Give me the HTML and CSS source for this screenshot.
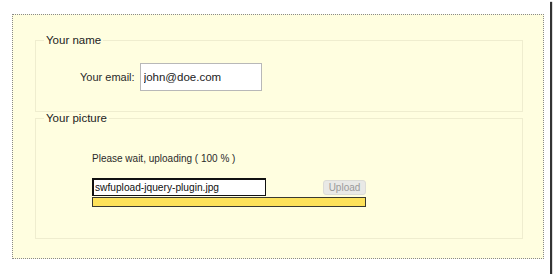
FILE: index.html
```html
<!DOCTYPE html>
<html lang="en">
<head>
  <meta charset="UTF-8">
  <title>SWFUpload jQuery plugin</title>
  <link rel="stylesheet" href="styles.css">
</head>
<body>

  <div class="shot">
    <div class="panel">

      <fieldset class="name_box">
        <legend>Your name</legend>
        <div class="email_row">
          <label for="email">Your email:</label>
          <input type="text" id="email" class="email" value="john@doe.com">
        </div>
      </fieldset>

      <fieldset class="picture_box">
        <legend>Your picture</legend>
        <div class="upload_area">
          <p class="status">Please wait, uploading ( 100 % )</p>
          <div class="file_row">
            <div class="file_name">swfupload-jquery-plugin.jpg</div>
            <a href="#" class="upload_button">Upload</a>
          </div>
          <div class="progress"><div class="progress_fill" style="width: 100%"></div></div>
        </div>
      </fieldset>

    </div>
  </div>

</body>
</html>
```

FILE: styles.css
```css
body {
  margin: 0;
  background: #fff;
  font-family: "Liberation Sans", Arial, sans-serif;
  color: #2a2a2a;
}

.shot {
  width: 550px;
  height: 274px;
  box-sizing: border-box;
  padding: 14px 0 0 12px;
  background: #fff;
  box-shadow: 2px 2px 1px #333;
}

.panel {
  width: 532px;
  height: 245px;
  box-sizing: border-box;
  border: 1px dotted #8a8a8a;
  background: #fffee0;
  padding: 19px 20px 0 22px;
}

fieldset {
  margin: 0;
  border: 1px solid #efedcf;
  padding: 0 0 0 8px;
  min-width: 0;
}

legend {
  padding: 0 2px;
  font-size: 11.5px;
  line-height: 13px;
  color: #222;
}

.name_box {
  padding-top: 16px;
  padding-bottom: 20px;
}

.email_row {
  display: flex;
  align-items: center;
  margin-left: 36px;
}

.email_row label {
  font-size: 11px;
  margin-right: 5px;
}

.email {
  width: 122px;
  height: 28px;
  box-sizing: border-box;
  margin: 0;
  border: 1px solid #b8b8b8;
  background: #fff;
  padding: 0 3px;
  font-family: inherit;
  font-size: 11.5px;
  color: #222;
  outline: none;
}

.picture_box {
  padding-top: 27px;
  padding-bottom: 31px;
}

.upload_area {
  margin-left: 48px;
}

.status {
  margin: 0 0 13px 0;
  font-size: 10px;
  line-height: 13px;
}

.file_row {
  width: 274px;
  display: flex;
  justify-content: space-between;
  align-items: center;
}

.file_name {
  width: 174px;
  height: 18px;
  box-sizing: border-box;
  border: 1px solid #111;
  border-width: 2px 1px 1px 2px;
  background: #fff;
  padding-left: 1px;
  font-size: 10.2px;
  line-height: 15px;
  color: #111;
}

.upload_button {
  width: 43px;
  height: 15px;
  box-sizing: border-box;
  border: 1px solid #dcdcd6;
  border-radius: 3px;
  background: #e9e9e6;
  text-align: center;
  text-decoration: none;
  font-size: 10px;
  line-height: 13px;
  color: #9a9a9a;
}

.progress {
  width: 274px;
  height: 10px;
  box-sizing: border-box;
  margin-top: 1px;
  border: 1px solid #3a3a30;
  background: #fffee0;
}

.progress_fill {
  height: 100%;
  background: #fde25a;
}
```
